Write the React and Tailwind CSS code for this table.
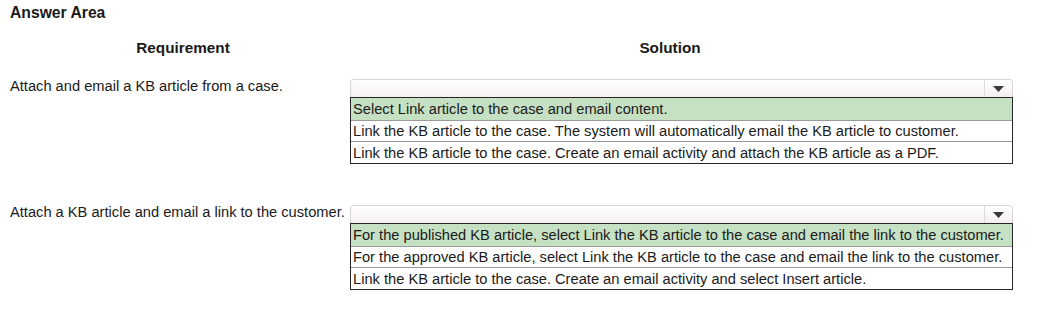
import React from 'react';

// two requirement rows, each with a dropdown + its open option list
const rows = [
  {
    label: 'Attach and email a KB article from a case.',
    options: [
      'Select Link article to the case and email content.',
      'Link the KB article to the case. The system will automatically email the KB article to customer.',
      'Link the KB article to the case. Create an email activity and attach the KB article as a PDF.',
    ],
    correct: 0,
  },
  {
    label: 'Attach a KB article and email a link to the customer.',
    options: [
      'For the published KB article, select Link the KB article to the case and email the link to the customer.',
      'For the approved KB article, select Link the KB article to the case and email the link to the customer.',
      'Link the KB article to the case. Create an email activity and select Insert article.',
    ],
    correct: 0,
  },
];

const rowHeights = ['h-[22px]', 'h-[21px]', 'h-[22px]'];

const SelectBox = () => (
  <div className="flex h-[18px] rounded-t-[4px] border border-b-0 border-[#d6d6d6] bg-gradient-to-b from-white to-[#f4efef]">
    <div className="flex-1" />
    <div className="flex w-[28px] items-center justify-center border-l border-[#dcdcdc]">
      <svg width="11" height="6" viewBox="0 0 11 6">
        <path d="M0 0h11L5.5 6z" fill="#3a3a3a" />
      </svg>
    </div>
  </div>
);

const Dropdown = ({ options, correct }) => (
  <div className="w-[663px]">
    <SelectBox />
    <div className="border border-[#262626]">
      {options.map((opt, i) => (
        <div
          key={i}
          className={`flex ${rowHeights[i]} items-center pl-[2px] whitespace-nowrap ${i > 0 ? 'border-t border-[#9a9a9a]' : ''} ${i === correct ? 'bg-[#c6e0c4]' : 'bg-white'}`}
        >
          {opt}
        </div>
      ))}
    </div>
  </div>
);

export default function App() {
  return (
    <div
      className="h-[327px] w-[1045px] bg-white px-[10px] pt-[5px] text-[14.67px] leading-4 text-[#1a1a1a]"
      style={{ fontFamily: '"Liberation Sans", Arial, sans-serif' }}
    >
      <div className="text-[15.7px] font-bold">Answer Area</div>

      <div className="mt-[19px] flex text-[15.3px] font-bold">
        <div className="w-[346px] text-center">Requirement</div>
        <div className="w-[628px] text-center">Solution</div>
      </div>

      <div className="mt-[21px] flex flex-col gap-[39px]">
        {rows.map((row, i) => (
          <div key={i} className="flex items-start">
            <div className="w-[340px] pt-[1px] whitespace-nowrap">{row.label}</div>
            <div className="mt-[2px]">
              <Dropdown options={row.options} correct={row.correct} />
            </div>
          </div>
        ))}
      </div>
    </div>
  );
}
